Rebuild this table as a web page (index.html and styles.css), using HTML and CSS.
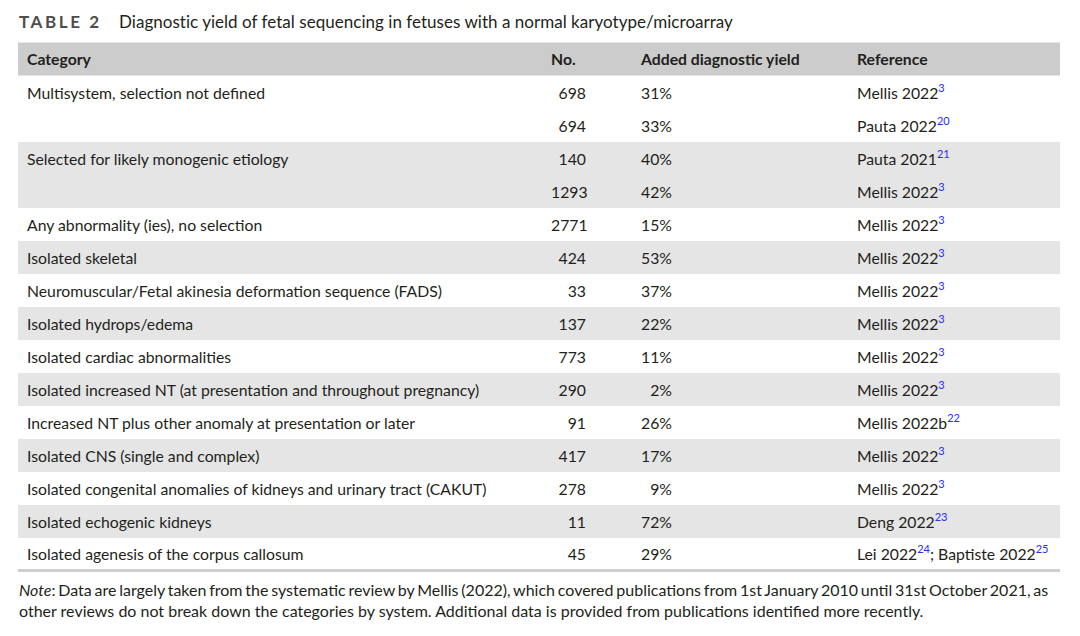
FILE: index.html
```html
<!DOCTYPE html>
<html lang="en">
<head>
<meta charset="utf-8">
<title>Table 2</title>
<link rel="stylesheet" href="styles.css">
</head>
<body>
<div class="page">
  <div class="caption"><span class="label">TABLE 2</span><span class="title">Diagnostic yield of fetal sequencing in fetuses with a normal karyotype/microarray</span></div>
  <table class="data">
    <colgroup>
      <col class="c-cat"><col class="c-no"><col class="c-yield"><col class="c-ref">
    </colgroup>
    <thead>
      <tr><th>Category</th><th>No.</th><th>Added diagnostic yield</th><th>Reference</th></tr>
    </thead>
    <tbody>
      <tr class="w"><td>Multisystem, selection not defined</td><td class="num">698</td><td><span class="pct">31%</span></td><td>Mellis 2022<sup>3</sup></td></tr>
      <tr class="w"><td></td><td class="num">694</td><td><span class="pct">33%</span></td><td>Pauta 2022<sup>20</sup></td></tr>
      <tr class="g"><td>Selected for likely monogenic etiology</td><td class="num">140</td><td><span class="pct">40%</span></td><td>Pauta 2021<sup>21</sup></td></tr>
      <tr class="g"><td></td><td class="num">1293</td><td><span class="pct">42%</span></td><td>Mellis 2022<sup>3</sup></td></tr>
      <tr class="w"><td>Any abnormality (ies), no selection</td><td class="num">2771</td><td><span class="pct">15%</span></td><td>Mellis 2022<sup>3</sup></td></tr>
      <tr class="g"><td>Isolated skeletal</td><td class="num">424</td><td><span class="pct">53%</span></td><td>Mellis 2022<sup>3</sup></td></tr>
      <tr class="w"><td>Neuromuscular/Fetal akinesia deformation sequence (FADS)</td><td class="num">33</td><td><span class="pct">37%</span></td><td>Mellis 2022<sup>3</sup></td></tr>
      <tr class="g"><td>Isolated hydrops/edema</td><td class="num">137</td><td><span class="pct">22%</span></td><td>Mellis 2022<sup>3</sup></td></tr>
      <tr class="w"><td>Isolated cardiac abnormalities</td><td class="num">773</td><td><span class="pct">11%</span></td><td>Mellis 2022<sup>3</sup></td></tr>
      <tr class="g"><td>Isolated increased NT (at presentation and throughout pregnancy)</td><td class="num">290</td><td><span class="pct">2%</span></td><td>Mellis 2022<sup>3</sup></td></tr>
      <tr class="w"><td>Increased NT plus other anomaly at presentation or later</td><td class="num">91</td><td><span class="pct">26%</span></td><td>Mellis 2022b<sup>22</sup></td></tr>
      <tr class="g"><td>Isolated CNS (single and complex)</td><td class="num">417</td><td><span class="pct">17%</span></td><td>Mellis 2022<sup>3</sup></td></tr>
      <tr class="w"><td>Isolated congenital anomalies of kidneys and urinary tract (CAKUT)</td><td class="num">278</td><td><span class="pct">9%</span></td><td>Mellis 2022<sup>3</sup></td></tr>
      <tr class="g"><td>Isolated echogenic kidneys</td><td class="num">11</td><td><span class="pct">72%</span></td><td>Deng 2022<sup>23</sup></td></tr>
      <tr class="w last"><td>Isolated agenesis of the corpus callosum</td><td class="num">45</td><td><span class="pct">29%</span></td><td>Lei 2022<sup>24</sup>; Baptiste 2022<sup>25</sup></td></tr>
    </tbody>
  </table>
  <p class="note"><em>Note</em>: Data are largely taken from the systematic review by Mellis (2022), which covered publications from 1st January 2010 until 31st October 2021, as other reviews do not break down the categories by system. Additional data is provided from publications identified more recently.</p>
</div>
</body>
</html>
```

FILE: styles.css
```css
html, body {
  margin: 0;
  padding: 0;
  background: #ffffff;
}
body {
  font-family: Lato, "Liberation Sans", sans-serif;
  color: #231f20;
  font-size: 15.75px;
}
.page {
  padding: 11px 18px 0 18px;
  width: 1042px;
}
.caption {
  display: flex;
  align-items: baseline;
  height: 31px;
  padding-left: 1px;
  font-size: 17px;
}
.label {
  font-weight: 700;
  letter-spacing: 2.6px;
  color: #4d4d4f;
  width: 100px;
}
.title {
  letter-spacing: 0.03px;
}
.data {
  width: 1042px;
  border-collapse: collapse;
  table-layout: fixed;
}
.c-cat { width: 524px; }
.c-no { width: 90px; }
.c-yield { width: 216px; }
.c-ref { width: 212px; }
.data th {
  background: #cccccc;
  font-weight: 700;
  text-align: left;
  height: 33px;
  padding: 0 9px 1px;
  border-top: 1px solid #e6e6e6;
  border-bottom: 1px solid #e6e6e6;
  box-sizing: border-box;
}
.data td {
  height: 33px;
  padding: 0 9px;
  box-sizing: border-box;
  white-space: nowrap;
}
.data tr.g td { background: #e5e5e5; }
.data tr.last td { border-bottom: 3px solid #cfcfcf; }
.data td.num {
  text-align: right;
  padding-right: 46px;
}
.pct {
  display: inline-block;
  width: 31px;
  text-align: right;
}
sup {
  font-size: 11px;
  color: #2a2aff;
  vertical-align: 7px;
  line-height: 0;
}
.note {
  margin: 7px 0 0 1px;
  line-height: 21px;
  font-size: 16px;
  width: 1052px;
}
.note::first-line {
  word-spacing: -1.3px;
}
```
